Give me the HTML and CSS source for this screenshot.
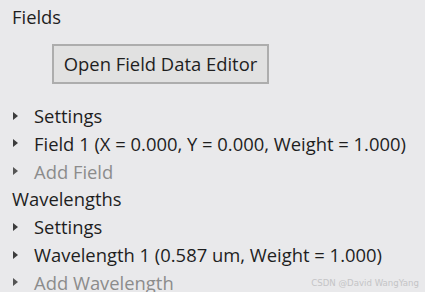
FILE: index.html
```html
<!DOCTYPE html>
<html>
<head>
<meta charset="utf-8">
<link rel="stylesheet" href="styles.css">
</head>
<body>
<div class="panel">
  <div class="header">Fields</div>
  <div class="btn-row"><button class="btn">Open Field Data Editor</button></div>
  <div class="item"><span class="arrow"></span><span>Settings</span></div>
  <div class="item"><span class="arrow"></span><span>Field 1 (X = 0.000, Y = 0.000, Weight = 1.000)</span></div>
  <div class="item muted"><span class="arrow"></span><span>Add Field</span></div>
  <div class="header">Wavelengths</div>
  <div class="item"><span class="arrow"></span><span>Settings</span></div>
  <div class="item"><span class="arrow"></span><span>Wavelength 1 (0.587 um, Weight = 1.000)</span></div>
  <div class="item muted"><span class="arrow"></span><span>Add Wavelength</span></div>
</div>
<div class="watermark">CSDN @David WangYang</div>
</body>
</html>
```
FILE: styles.css
```css
html, body {
  margin: 0;
  padding: 0;
  background: #e9e9eb;
  width: 425px;
  height: 292px;
  overflow: hidden;
}
body {
  font-family: "Open Sans", "Noto Sans", sans-serif;
  font-size: 18.4px;
  color: #1e1e1e;
  position: relative;
}
.panel {
  display: flex;
  flex-direction: column;
  padding: 3px 0 0 10px;
}
.header {
  height: 27.8px;
  line-height: 27.8px;
  padding-left: 2px;
  flex: none;
}
.btn-row {
  padding: 13px 0 18px 42px;
  flex: none;
}
.btn {
  font: inherit;
  color: #1e1e1e;
  width: 217px;
  height: 40px;
  background: #e1e1e1;
  border: 2px solid #adadad;
  padding: 0;
  margin: 0;
  display: block;
}
.item {
  height: 27.8px;
  flex: none;
  display: flex;
  align-items: center;
  gap: 16px;
  padding-left: 3px;
  white-space: nowrap;
}
.arrow {
  flex: none;
  width: 0;
  height: 0;
  border-top: 4px solid transparent;
  border-bottom: 4px solid transparent;
  border-left: 5px solid #3c3c3c;
}
.muted { color: #8c8c8c; }
.muted .arrow { border-left-color: #555; }
.watermark {
  position: absolute;
  right: 6px;
  bottom: 4px;
  font-family: "DejaVu Sans", sans-serif;
  font-size: 8.6px;
  color: #c4c4c6;
}
```
